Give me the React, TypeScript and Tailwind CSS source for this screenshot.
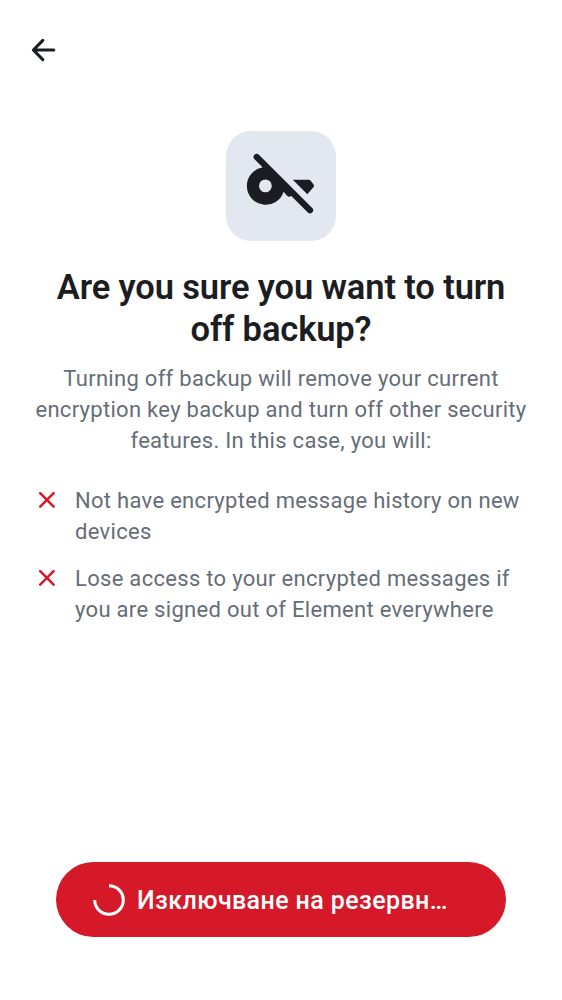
export default function App() {
  const Cross = () => (
    <svg className="mt-[7px] ml-[3px] shrink-0" width="16" height="16" viewBox="0 0 16 16" stroke="#d51928" strokeWidth="2.5" strokeLinecap="round"><path d="M1.2 1.2 14.6 14.6M14.6 1.2 1.2 14.6" /></svg>
  );
  return (
    <div className="flex h-[1000px] w-[562px] flex-col bg-white font-[Roboto,sans-serif] text-[#1b1d22]">
      <header className="flex h-[100px] items-center pl-[31px]">
        <svg width="25" height="24" viewBox="0 0 25 24" fill="none" stroke="currentColor" strokeWidth="3.1" strokeLinecap="round" strokeLinejoin="round"><path d="M11.8 2.4 2.4 12 11.8 21.6M2.4 12H22.8" /></svg>
      </header>
      <main className="flex flex-1 flex-col items-center pt-[31px]">
        <div className="flex size-[110px] items-center justify-center rounded-[25px] bg-[#e3e8f0]">
          <svg width="110" height="110" viewBox="0 0 110 110">
            <path fillRule="evenodd" fill="#1b1d22" d="M36.3 36.5A18.8 18.8 0 1 0 57.6 60.7L60.8 64.6Q62.4 66.4 64.1 65.4L65.4 64.8Q66.5 64.7 67.6 66L72 66 36.3 31ZM39.4 48.5a6.4 6.4 0 1 1 0 12.8a6.4 6.4 0 0 1 0-12.8Z" />
            <path d="M66.8 48.8H82.8Q83.9 48.8 84.6 49.7L87.6 53.4Q88.5 54.7 87.6 56L81.3 63.3Z" fill="#1b1d22" />
            <path d="M30.7 26 84 79.3" stroke="#1b1d22" strokeWidth="6.2" strokeLinecap="round" />
          </svg>
        </div>
        <h1 className="mt-[25px] text-center text-[34.5px] leading-[42px] font-semibold tracking-[-0.13px]">Are you sure you want to turn<br />off backup?</h1>
        <p className="mt-[13px] text-center text-[22px] leading-[31px] tracking-[0.29px] text-[#656d77]">Turning off backup will remove your current<br />encryption key backup and turn off other security<br />features. In this case, you will:</p>
        <ul className="mt-[29px] flex w-full flex-col gap-4 pl-9 text-[22px] leading-[31px] tracking-[0.3px] text-[#656d77]">
          <li className="flex gap-5"><Cross /><span>Not have encrypted message history on new<br />devices</span></li>
          <li className="flex gap-5"><Cross /><span>Lose access to your encrypted messages if<br />you are signed out of Element everywhere</span></li>
        </ul>
      </main>
      <footer className="flex h-[137.6px] shrink-0 items-start justify-center">
        <button className="flex h-[75px] w-[450px] items-center rounded-full bg-[#d51928] pl-[37px] text-[25px] font-medium text-white">
          <svg className="mr-[12px]" width="32" height="32" viewBox="0 0 32 32" fill="none" stroke="currentColor" strokeWidth="3"><path d="M16 1.7A14.3 14.3 0 1 1 1.7 16" /></svg>
          <span className="pt-[2px] tracking-[0.4px]">Изключване на резервн…</span>
        </button>
      </footer>
    </div>
  );
}
